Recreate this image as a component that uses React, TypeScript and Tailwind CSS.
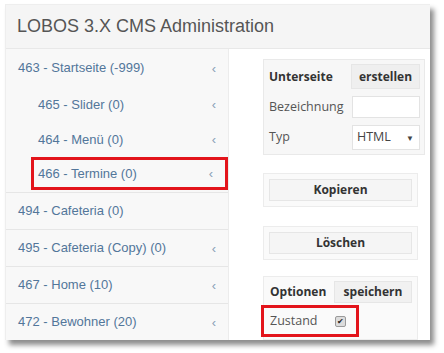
import React from "react";

function Row({ label, sub, hl, chevron = true, cls }: { label: string; sub?: boolean; hl?: boolean; chevron?: boolean; cls: string }) {
  return (
    <div
      className={`flex items-center justify-between ${cls} ${sub ? "pl-[32px]" : "pl-[12px]"} pr-[12px] ${
        hl ? "border-[3px] border-[#e3141b] ml-[25px] !pl-[4px] pr-[9px]" : ""
      }`}
    >
      <span className="text-[13px] text-[#52769a]">{label}</span>
      {chevron && <span className="text-[13px] text-[#8aa0b6] leading-none">‹</span>}
    </div>
  );
}

export default function App() {
  return (
    <div className="w-[444px] h-[353px] bg-white pt-[4px] pl-[5px]" style={{ fontFamily: '"Liberation Sans", Arial, sans-serif' }}>
      <div className="w-[425px] h-[336px] bg-white flex flex-col shadow-[4px_5px_5px_rgba(0,0,0,0.45)] border-l border-t border-[#eeeeee]">
        <div className="h-[44px] shrink-0 bg-[#f5f5f5] border-b border-[#e8e8e8] flex items-center pl-[11px] text-[18px] text-[#555555]">
          LOBOS 3.X CMS Administration
        </div>
        <div className="flex flex-1 min-h-0">
          <div className="w-[223px] shrink-0 bg-[#f8f8f8] border-r border-[#ececec] flex flex-col">
            <Row label="463 - Startseite (-999)" cls="h-[38px]" />
            <div className="flex flex-col border-b border-[#e6e6e6]">
              <Row label="465 - Slider (0)" sub cls="h-[35px]" />
              <Row label="464 - Menü (0)" sub cls="h-[35px]" />
              <Row label="466 - Termine (0)" sub hl cls="h-[33px] mb-[2px]" />
            </div>
            <div className="h-[37px] border-b border-[#e6e6e6] flex items-center pl-[12px]">
              <span className="text-[13px] text-[#52769a]">494 - Cafeteria (0)</span>
            </div>
            <Row label="495 - Cafeteria (Copy) (0)" cls="h-[37px] border-b border-[#e6e6e6]" />
            <Row label="467 - Home (10)" cls="h-[37px] border-b border-[#e6e6e6]" />
            <Row label="472 - Bewohner (20)" cls="h-[36px]" />
          </div>
          <div
            className="flex-1 bg-white pl-[34px] pr-[5px] pt-[10px] flex flex-col text-[12.5px] text-[#333]"
            style={{ fontFamily: '"Open Sans", "Liberation Sans", sans-serif' }}
          >
            <div className="border border-[#e9e9e9] bg-[#f7f7f7] px-[4px] py-[4px] flex flex-col gap-[7px]">
              <div className="flex items-center justify-between">
                <span className="font-bold text-[12px] text-[#333] pl-[1px]">Unterseite</span>
                <span className="w-[69px] h-[25px] bg-[#efefef] border border-[#e6e6e6] flex items-center justify-center font-bold text-[12px] text-[#333]">
                  erstellen
                </span>
              </div>
              <div className="flex items-center justify-between">
                <span className="text-[#555] pl-[1px]">Bezeichnung</span>
                <span className="w-[68px] h-[22px] bg-white border border-[#e3e3e3]" />
              </div>
              <div className="flex items-center justify-between">
                <span className="text-[#555] pl-[1px]">Typ</span>
                <span className="w-[68px] h-[25px] bg-white border border-[#e3e3e3] flex items-center justify-between pl-[4px] pr-[5px] text-[#444]">
                  HTML<span className="text-[8px]">▼</span>
                </span>
              </div>
            </div>
            <div className="mt-[18px] w-[155px] border border-[#ececec] bg-[#fafafa] p-[5px]">
              <div className="h-[22px] border border-[#e6e6e6] bg-[#f5f5f5] flex items-center justify-center font-bold text-[12px] text-[#333]">
                Kopieren
              </div>
            </div>
            <div className="mt-[19px] w-[155px] border border-[#ececec] bg-[#fafafa] p-[5px]">
              <div className="h-[22px] border border-[#e6e6e6] bg-[#f5f5f5] flex items-center justify-center font-bold text-[12px] text-[#333]">
                Löschen
              </div>
            </div>
            <div className="mt-[16px] w-[155px] flex-1 border border-[#ececec] bg-[#fafafa] pt-[4px] flex flex-col">
              <div className="flex items-center justify-between pl-[6px] pr-[5px]">
                <span className="font-bold text-[12px] text-[#333]">Optionen</span>
                <span className="w-[78px] h-[22px] bg-[#f1f1f1] border border-[#e6e6e6] flex items-center justify-center font-bold text-[12px] text-[#333]">
                  speichern
                </span>
              </div>
              <div className="mt-[2px] ml-[-3px] w-[98px] h-[32px] border-[3px] border-[#e3141b] flex items-center pl-[6px]">
                <span className="text-[#555]">Zustand</span>
                <span className="ml-[17px] w-[11px] h-[11px] rounded-[2px] bg-[#dcdcdc] border border-[#9a9a9a] flex items-center justify-center text-[8px] leading-none text-[#222]">
                  ✔
                </span>
              </div>
            </div>
          </div>
        </div>
      </div>
    </div>
  );
}
